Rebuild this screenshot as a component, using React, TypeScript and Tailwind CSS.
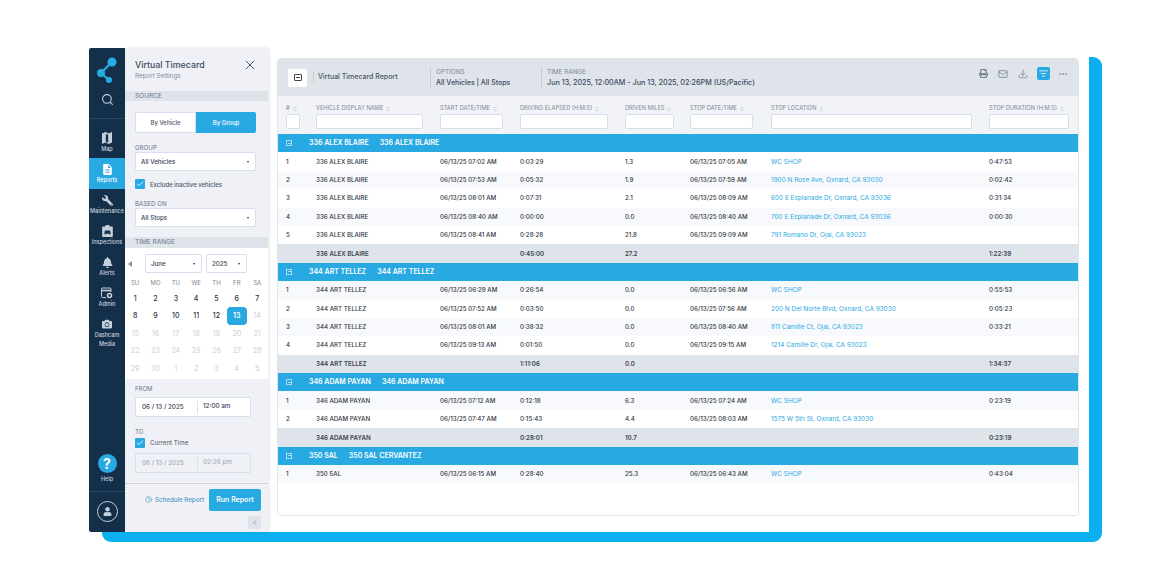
import { ChevronLeft, Clock, Download, Ellipsis, ListFilter, Mail, Search, X, Check, ChevronsUpDown } from "lucide-react";
import { FaBell, FaCamera, FaPrint, FaUser, FaWrench } from "react-icons/fa";
import { MdDescription } from "react-icons/md";
import type { ReactNode } from "react";

const GRID = "grid grid-cols-[38px_124px_80px_105px_65px_81px_218px_1fr]";

const columns = [
  { label: "#", input: "w-[14px]" },
  { label: "VEHICLE DISPLAY NAME", input: "w-[107px]" },
  { label: "START DATE/TIME", input: "w-[63px]" },
  { label: "DRIVING ELAPSED (H:M:S)", input: "w-[88px]" },
  { label: "DRIVEN MILES", input: "w-[49px]" },
  { label: "STOP DATE/TIME", input: "w-[63px]" },
  { label: "STOP LOCATION", input: "w-[201px]" },
  { label: "STOP DURATION (H:M:S)", input: "w-[80px]" },
];

const groups = [
  {
    title: "336 ALEX BLAIRE",
    title2: "336 ALEX BLAIRE",
    start: 0,
    rows: [
      ["06/13/25 07:02 AM", "0:03:29", "1.3", "06/13/25 07:05 AM", "WC SHOP", "0:47:53"],
      ["06/13/25 07:53 AM", "0:05:32", "1.9", "06/13/25 07:59 AM", "1900 N Rose Ave, Oxnard, CA 93030", "0:02:42"],
      ["06/13/25 08:01 AM", "0:07:31", "2.1", "06/13/25 08:09 AM", "600 E Esplanade Dr, Oxnard, CA 93036", "0:31:34"],
      ["06/13/25 08:40 AM", "0:00:00", "0.0", "06/13/25 08:40 AM", "700 E Esplanade Dr, Oxnard, CA 93036", "0:00:30"],
      ["06/13/25 08:41 AM", "0:28:28", "21.8", "06/13/25 09:09 AM", "791 Romano Dr, Ojai, CA 93023", ""],
    ],
    total: ["0:45:00", "27.2", "1:22:39"],
  },
  {
    title: "344 ART TELLEZ",
    title2: "344 ART TELLEZ",
    start: 5,
    rows: [
      ["06/13/25 06:29 AM", "0:26:54", "0.0", "06/13/25 06:56 AM", "WC SHOP", "0:55:53"],
      ["06/13/25 07:52 AM", "0:03:50", "0.0", "06/13/25 07:56 AM", "200 N Del Norte Blvd, Oxnard, CA 93030", "0:05:23"],
      ["06/13/25 08:01 AM", "0:38:32", "0.0", "06/13/25 08:40 AM", "811 Camille Ct, Ojai, CA 93023", "0:33:21"],
      ["06/13/25 09:13 AM", "0:01:50", "0.0", "06/13/25 09:15 AM", "1214 Camille Dr, Ojai, CA 93023", ""],
    ],
    total: ["1:11:06", "0.0", "1:34:37"],
  },
  {
    title: "346 ADAM PAYAN",
    title2: "346 ADAM PAYAN",
    start: 9,
    rows: [
      ["06/13/25 07:12 AM", "0:12:18", "6.3", "06/13/25 07:24 AM", "WC SHOP", "0:23:19"],
      ["06/13/25 07:47 AM", "0:15:43", "4.4", "06/13/25 08:03 AM", "1575 W 5th St, Oxnard, CA 93030", ""],
    ],
    total: ["0:28:01", "10.7", "0:23:19"],
  },
  {
    title: "350 SAL",
    title2: "350 SAL CERVANTEZ",
    start: 11,
    rows: [["06/13/25 06:15 AM", "0:28:40", "25.3", "06/13/25 06:43 AM", "WC SHOP", "0:43:04"]],
    total: null,
  },
];

function MapIcon() {
  return (
    <svg width="10" height="12" viewBox="0 0 10 12" fill="currentColor">
      <path fillRule="evenodd" d="M0 1.500 3.300 0 6.700 1.500 10 0V10.500L6.700 12 3.300 10.500 0 12ZM3.800 2V9.800L6.200 10.700V2.800Z" />
    </svg>
  );
}

function InspectionIcon() {
  return (
    <svg width="11" height="12" viewBox="0 0 11 12" fill="currentColor">
      <path fillRule="evenodd" d="M1.200 1.500H3.400V1a1 1 0 0 1 1-1h2.200a1 1 0 0 1 1 1v.5h2.200c.6 0 1 .4 1 1v8.500c0 .6-.4 1-1 1H1.200c-.6 0-1-.4-1-1V2.500c0-.6.4-1 1-1ZM3 5.500 2.500 7.200V9.500H3.700V8.800H7.300V9.500H8.500V7.200L8 5.500H3Z" />
    </svg>
  );
}

function AdminIcon() {
  return (
    <svg width="12" height="12" viewBox="0 0 12 12" fill="none" stroke="currentColor">
      <path d="M5 10.500H1.500a1 1 0 0 1-1-1V2a1 1 0 0 1 1-1h7.500a1 1 0 0 1 1 1v3" />
      <path d="M.5 3.500H10" strokeWidth="1.600" />
      <circle cx="8.500" cy="8.500" r="2" strokeWidth="1.500" />
    </svg>
  );
}

const navItems: { label: ReactNode; icon: ReactNode; h: string; active?: boolean }[] = [
  { label: "Map", icon: <MapIcon />, h: "h-[31px]" },
  { label: "Reports", icon: <MdDescription size={13} />, h: "h-[31px]", active: true },
  { label: "Maintenance", icon: <FaWrench size={11} className="-scale-x-100" />, h: "h-[31px]" },
  { label: "Inspections", icon: <InspectionIcon />, h: "h-[31px]" },
  { label: "Alerts", icon: <FaBell size={11} />, h: "h-[31px]" },
  { label: "Admin", icon: <AdminIcon />, h: "h-[31px]" },
  { label: <>Dashcam<br />Media</>, icon: <FaCamera size={10} />, h: "h-[40px]" },
];

function Logo() {
  return (
    <svg width="20" height="26" viewBox="0 0 20 26" className="text-[#29a9e1]">
      <path d="M15 5 L4 16 L12 23" fill="none" stroke="currentColor" strokeWidth="2.2" />
      <circle cx="15" cy="5" r="4.500" fill="currentColor" />
      <circle cx="4" cy="16" r="4" fill="currentColor" />
      <circle cx="12" cy="23" r="3" fill="currentColor" />
    </svg>
  );
}

function SectionBar({ children, className }: { children: ReactNode; className: string }) {
  return (
    <div className={`bg-[#dfe3ea] pl-[10px] text-[6.5px] text-[#68758c] ${className}`}>{children}</div>
  );
}

function SelectBox({ value, className }: { value: string; className: string }) {
  return (
    <div className={`flex items-center justify-between rounded-[2px] border border-[#d5dff0] bg-white pl-[5px] pr-[6px] text-[6.2px] font-medium text-[#374354] ${className}`}>
      <span>{value}</span>
      <span className="h-0 w-0 border-x-[1.5px] border-t-[2px] border-x-transparent border-t-[#333]" />
    </div>
  );
}

function CheckBox() {
  return (
    <span className="flex h-[10px] w-[10px] items-center justify-center rounded-[1px] bg-[#29a9e1] text-white">
      <Check size={8} strokeWidth={2.5} />
    </span>
  );
}

function DateInput({ date, time, dim }: { date: string; time: string; dim?: boolean }) {
  return (
    <div className={`flex h-[20px] w-[116px] items-center rounded-[2px] border border-[#d5dff0] text-[6.3px] font-medium ${dim ? "bg-[#eff1f6] text-[#a3abb8]" : "bg-white text-[#374354]"}`}>
      <span className="w-[62px] border-r border-[#d5dff0] pl-[6px] leading-[13px]">{date}</span>
      <span className="pl-[5px]">{time}</span>
    </div>
  );
}

function Calendar() {
  const days = ["SU", "MO", "TU", "WE", "TH", "FR", "SA"];
  const cells = [
    ...Array.from({ length: 30 }, (_, i) => i + 1),
    1, 2, 3, 4, 5,
  ];
  return (
    <div className="h-[131px] bg-white pt-[6px]">
      <div className="flex items-center pl-[3px]">
        <span className="mr-[13px] h-0 w-0 border-y-[3px] border-r-[4px] border-y-transparent border-r-[#8a93a3]" />
        <SelectBox value="June" className="h-[19px] w-[57px]" />
        <SelectBox value="2025" className="ml-[4px] h-[19px] w-[41px]" />
      </div>
      <div className="mt-[5px] grid grid-cols-[repeat(7,20.33px)] text-center">
        {days.map((d) => (
          <div key={d} className="h-[12px] text-[6px] leading-[10px] text-[#7b8696]">{d}</div>
        ))}
        {cells.map((n, i) => (
          <div key={i} className={`flex h-[17.5px] items-center justify-center text-[7px] font-medium ${i < 12 ? "text-[#2b3442]" : "text-[#d3d6dc]"}`}>
            {i === 12 ? (
              <span className="flex h-[18px] w-[20px] items-center justify-center rounded-[4px] bg-[#29a9e1] font-semibold text-white">13</span>
            ) : (
              n
            )}
          </div>
        ))}
      </div>
    </div>
  );
}

function ReportRow({ index, name, cells, odd }: { index: number; name: string; cells: string[]; odd: boolean }) {
  return (
    <div className={`${GRID} h-[18.4px] items-center text-[6.2px] font-medium leading-[10px] text-[#2f3742] ${odd ? "bg-white" : "bg-[#f8f9fd]"}`}>
      <div className="pl-[8px]">{index}</div>
      <div>{name}</div>
      <div>{cells[0]}</div>
      <div>{cells[1]}</div>
      <div>{cells[2]}</div>
      <div>{cells[3]}</div>
      <div className="text-[6.45px] font-normal text-[#29a9e1]">{cells[4]}</div>
      <div>{cells[5]}</div>
    </div>
  );
}

export default function App() {
  return (
    <div className="relative h-[580px] w-[1160px] overflow-hidden bg-white pl-[89px] pt-[48px] font-['Inter',sans-serif]">
      {/* blue card behind the app */}
      <div className="absolute left-[102px] top-[57px] h-[485px] w-[1000px] rounded-[9px] bg-[#0bb0f0]" />

      <div className="relative flex h-[484px] w-[1000px] bg-white">
        {/* Sidebar */}
        <div className="flex w-[36px] flex-col items-center rounded-l-[2px] bg-[#142f4a] text-[#c5d0dc]">
          <div className="mt-[9px] h-[26px]"><Logo /></div>
          <Search size={13} className="mt-[10px]" />
          <div className="mt-[12px] h-px w-full bg-[#2a4560]" />
          <div className="mt-[8px] flex w-full flex-col">
            {navItems.map((item, i) => (
              <div key={i} className={`flex ${item.h} flex-col items-center justify-center text-center text-[5.5px] font-medium leading-[9px] ${item.active ? "bg-[#29a9e1] text-white" : ""}`}>
                <span className="flex h-[14px] items-center">{item.icon}</span>
                <span>{item.label}</span>
              </div>
            ))}
          </div>
          <div className="mt-auto flex h-[19px] w-[19px] items-center justify-center rounded-full bg-[#29a9e1] text-[14px] font-bold text-white">?</div>
          <div className="mt-[2px] text-[5.5px] font-medium">Help</div>
          <div className="mt-[8px] h-px w-full bg-[#2a4560]" />
          <div className="mb-[10px] mt-[9px] flex h-[21px] w-[21px] items-center justify-center rounded-full border border-[#c5d0dc]">
            <FaUser size={9} />
          </div>
        </div>

        {/* Settings panel */}
        <div className="flex w-[143px] flex-col bg-[#eff1f6] shadow-[1px_0_3px_rgba(0,0,0,0.12)]">
          <div className="flex h-[43px] items-start justify-between pl-[10px] pr-[10px] pt-[11px]">
            <div>
              <div className="text-[8.8px] font-medium leading-[12px] text-[#3c4a5e]">Virtual Timecard</div>
              <div className="text-[6.3px] leading-[10px] text-[#7e8ba0]">Report Settings</div>
            </div>
            <X size={16} strokeWidth={1.5} className="mt-[-2px] text-[#4b5a70]" />
          </div>
          <SectionBar className="h-[10px] leading-[10px]">SOURCE</SectionBar>
          <div className="px-[10px] pt-[11px]">
            <div className="flex h-[21px] w-[121px] overflow-hidden rounded-[2px] text-[6px] font-medium">
              <div className="flex w-[61px] items-center justify-center border border-[#d5dff0] bg-white text-[#4b5566]">By Vehicle</div>
              <div className="flex flex-1 items-center justify-center bg-[#29a9e1] text-white">By Group</div>
            </div>
            <div className="mt-[10px] text-[6.2px] leading-[9px] text-[#68758c]">GROUP</div>
            <SelectBox value="All Vehicles" className="h-[19px] w-[121px]" />
            <div className="mt-[8px] flex items-center gap-[5px] text-[6px] font-medium text-[#4b5566]">
              <CheckBox />
              <span>Exclude inactive vehicles</span>
            </div>
            <div className="mt-[10px] text-[6.2px] leading-[9px] text-[#68758c]">BASED ON</div>
            <SelectBox value="All Stops" className="h-[19px] w-[121px]" />
          </div>
          <SectionBar className="mt-[10px] h-[11px] leading-[11px]">TIME RANGE</SectionBar>
          <Calendar />
          <div className="px-[10px] pt-[5px]">
            <div className="text-[6px] leading-[9px] text-[#68758c]">FROM</div>
            <div className="mt-[4px]"><DateInput date="06 / 13 / 2025" time="12:00 am" /></div>
            <div className="mt-[10px] text-[6px] leading-[9px] text-[#68758c]">TO</div>
            <div className="mt-[2px] flex items-center gap-[5px] text-[6.2px] text-[#4b5566]">
              <CheckBox />
              <span>Current Time</span>
            </div>
            <div className="mt-[5px]"><DateInput date="06 / 13 / 2025" time="02:26 pm" dim /></div>
          </div>
          <div className="mt-[10px] h-px bg-[#d0d3d9]" />
          <div className="flex flex-col items-end pr-[7px] pt-[5px]">
            <div className="flex items-center">
              <span className="mr-[5px] flex items-center gap-[3px] text-[6.2px] font-medium text-[#4d97c4]">
                <Clock size={7} />
                Schedule Report
              </span>
              <span className="flex h-[22px] w-[52px] items-center justify-center rounded-[2px] bg-[#29a9e1] text-[7px] font-semibold text-white">Run Report</span>
            </div>
            <span className="mt-[5px] flex h-[13px] w-[13px] items-center justify-center rounded-[2px] bg-[#dfe3ea] text-[#5b6778]">
              <ChevronLeft size={7} />
            </span>
          </div>
        </div>

        {/* Report */}
        <div className="ml-[9px] mt-[10px] h-[458px] w-[802px] overflow-hidden rounded-[4px] border border-[#dfe3ea] bg-white">
          <div className="flex h-[37px] items-center bg-[#dfe3ea] pl-[10px]">
            <span className="flex h-[18px] w-[19px] items-center justify-center rounded-[2px] bg-white">
              <span className="flex h-[7px] w-[8px] items-center justify-center rounded-[1px] border border-[#444]">
                <span className="h-px w-[4px] bg-[#444]" />
              </span>
            </span>
            <div className="ml-[6px] h-[11px] w-px bg-[#c8cdd8]" />
            <span className="ml-[4px] w-[112px] text-[7px] font-medium text-[#4b5566]">Virtual Timecard Report</span>
            <div className="h-[21px] w-px bg-[#c8cdd8]" />
            <div className="ml-[5px] w-[105px] leading-[10.5px]">
              <div className="text-[6.4px] text-[#7b879a]">OPTIONS</div>
              <div className="text-[7px] font-medium text-[#3c4a5e]">All Vehicles | All Stops</div>
            </div>
            <div className="h-[21px] w-px bg-[#c8cdd8]" />
            <div className="ml-[5px] leading-[10.5px]">
              <div className="text-[6.4px] text-[#7b879a]">TIME RANGE</div>
              <div className="text-[7.2px] font-medium text-[#3c4a5e]">Jun 13, 2025, 12:00AM - Jun 13, 2025, 02:26PM (US/Pacific)</div>
            </div>
            <div className="mb-[8px] ml-auto mr-[5px] flex items-center text-[#7b8696]">
              <span className="flex w-[20px] justify-center"><FaPrint size={9} /></span>
              <span className="flex w-[20px] justify-center"><Mail size={10} /></span>
              <span className="flex w-[20px] justify-center"><Download size={10} /></span>
              <span className="flex w-[20px] justify-center">
                <span className="flex h-[13px] w-[13px] items-center justify-center rounded-[2px] bg-[#29a9e1] text-white">
                  <ListFilter size={9} />
                </span>
              </span>
              <span className="flex w-[20px] justify-center"><Ellipsis size={10} /></span>
            </div>
          </div>

          <div className={`${GRID} h-[38px] bg-[#f1f3f7]`}>
            {columns.map((c, i) => (
              <div key={c.label} className={i === 0 ? "pl-[8px]" : ""}>
                <div className="mt-[7px] flex h-[11px] items-center gap-[2px] whitespace-nowrap text-[5.7px] text-[#7b879a]">
                  {c.label}
                  <ChevronsUpDown size={6} className="text-[#a5aebc]" />
                </div>
                <div className={`h-[15px] ${c.input} rounded-[2px] border border-[#d5dff0] bg-white`} />
              </div>
            ))}
          </div>

          {groups.map((g) => (
            <div key={g.title}>
              <div className="flex h-[18.4px] items-center bg-[#29a9e1] text-[7px] font-semibold text-white">
                <span className="ml-[8px] flex h-[6px] w-[6px] items-center justify-center border border-white/60">
                  <span className="h-px w-[3px] bg-white/60" />
                </span>
                <span className="ml-[17px]">{g.title}</span>
                <span className="ml-[11px]">{g.title2}</span>
              </div>
              {g.rows.map((r, i) => (
                <ReportRow key={i} index={i + 1} name={g.title} cells={r} odd={(g.start + i) % 2 === 0} />
              ))}
              {g.total && (
                <div className={`${GRID} h-[18.4px] items-center bg-[#dfe3ea] text-[6.2px] font-semibold text-[#3c4552]`}>
                  <div />
                  <div>{g.title}</div>
                  <div />
                  <div>{g.total[0]}</div>
                  <div>{g.total[1]}</div>
                  <div />
                  <div />
                  <div>{g.total[2]}</div>
                </div>
              )}
            </div>
          ))}
        </div>
      </div>
    </div>
  );
}
